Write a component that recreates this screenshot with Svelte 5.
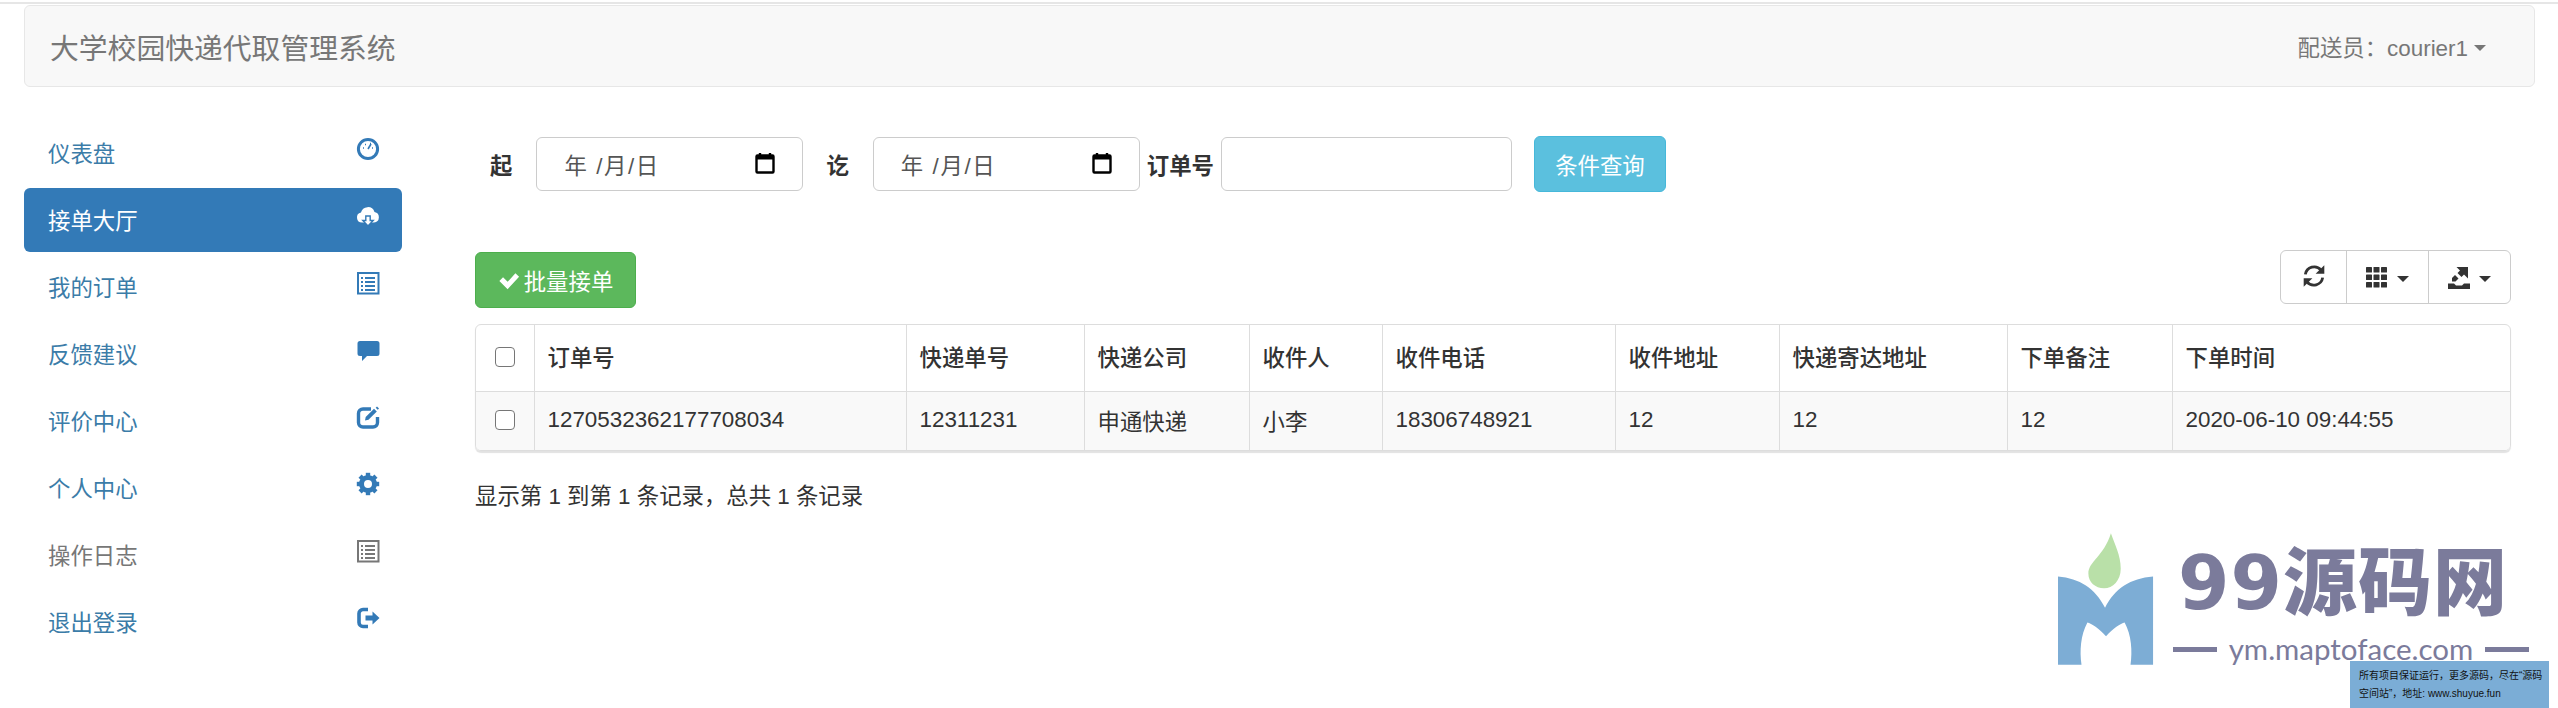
<script>
    const menu = [
        { label: '仪表盘', icon: 'dashboard' },
        { label: '接单大厅', icon: 'cloud', active: true },
        { label: '我的订单', icon: 'list' },
        { label: '反馈建议', icon: 'comment' },
        { label: '评价中心', icon: 'edit' },
        { label: '个人中心', icon: 'cog' },
        { label: '操作日志', icon: 'list', muted: true },
        { label: '退出登录', icon: 'logout' }
    ];

    const columns = [
        { title: '订单号', width: 372, value: '1270532362177708034' },
        { title: '快递单号', width: 178, value: '12311231' },
        { title: '快递公司', width: 165, value: '申通快递' },
        { title: '收件人', width: 133, value: '小李' },
        { title: '收件电话', width: 233, value: '18306748921' },
        { title: '收件地址', width: 164, value: '12' },
        { title: '快递寄达地址', width: 228, value: '12' },
        { title: '下单备注', width: 165, value: '12' },
        { title: '下单时间', width: 340, value: '2020-06-10 09:44:55' }
    ];

    const teeth = [0, 45, 90, 135, 180, 225, 270, 315];
</script>

{#snippet calendar()}
    <svg class="calendar" viewBox="0 0 20 22" aria-hidden="true">
        <path d="M5 1v4M15 1v4" stroke="#000" stroke-width="2.4" />
        <rect x="1.5" y="3.5" width="17" height="17" rx="1" fill="none" stroke="#000" stroke-width="2.4" />
        <rect x="1.5" y="3.5" width="17" height="4" fill="#000" />
    </svg>
{/snippet}

{#snippet icon(name)}
    <svg class="nav-icon" viewBox="0 0 24 24" aria-hidden="true">
        {#if name === 'dashboard'}
            <circle cx="12" cy="12" r="9.6" fill="none" stroke="currentColor" stroke-width="3" />
            <path d="M12 12l3-5" stroke="currentColor" stroke-width="1.6" />
            <path d="M7 11h1M9 7.500h1M14 6.500h1M16 11h1" stroke="currentColor" stroke-width="1.3" />
        {:else if name === 'cloud'}
            <path d="M6 18.500a5 5 0 0 1-1-9.900 7 7 0 0 1 13.500-.6 5.300 5.300 0 0 1-.5 10.500z" fill="currentColor" />
            <path d="M9.800 12h4.400v4.500h3L12 22l-5.200-5.500h3z" fill="currentColor" stroke="#337ab7" stroke-width="1.400" />
        {:else if name === 'list'}
            <rect x="2" y="2" width="20.500" height="20.500" fill="none" stroke="currentColor" stroke-width="2" />
            <path d="M5 7h2M9 7h10M5 11h2M9 11h10M5 15h2M9 15h10M5 19h2M9 19h10" stroke="currentColor" stroke-width="1.800" />
        {:else if name === 'comment'}
            <path d="M4 3h17a2.500 2.500 0 0 1 2.500 2.500v10A2.500 2.500 0 0 1 21 18H11l-5 5v-5H4a2.500 2.500 0 0 1-2.500-2.500v-10A2.500 2.500 0 0 1 4 3z" fill="currentColor" />
        {:else if name === 'edit'}
            <path d="M15 4H7a4.500 4.500 0 0 0-4.500 4.500v9A4.500 4.500 0 0 0 7 22h10a4.500 4.500 0 0 0 4.500-4.500V12" fill="none" stroke="currentColor" stroke-width="3.400" />
            <path d="M9 15.500l.7-3.500L18 3.800l2.800 2.800-8.300 8.200z" fill="currentColor" />
            <path d="M21 1.500l2 2-1.300 1.300-2-2z" fill="currentColor" />
        {:else if name === 'cog'}
            <circle cx="12" cy="12" r="6.500" fill="none" stroke="currentColor" stroke-width="5" />
            {#each teeth as t}
                <rect x="9.800" y="0.800" width="4.400" height="5" fill="currentColor" transform="rotate({t} 12 12)" />
            {/each}
        {:else if name === 'logout'}
            <path d="M12 3.500H7a4 4 0 0 0-4 4v9a4 4 0 0 0 4 4h5" fill="none" stroke="currentColor" stroke-width="3.600" />
            <path d="M9.500 9.500h7V5.500l7 6.500-7 6.500v-4h-7z" fill="currentColor" />
        {/if}
    </svg>
{/snippet}

<div class="page">
    <div class="top-line"></div>
    <header class="navbar">
        <span class="brand">大学校园快递代取管理系统</span>
        <span class="user">配送员：courier1<i class="caret"></i></span>
    </header>

    <div class="content">
        <nav class="sidebar">
            {#each menu as item}
                <div class="nav-item" class:active={item.active} class:muted={item.muted}>
                    <span>{item.label}</span>
                    {@render icon(item.icon)}
                </div>
            {/each}
        </nav>

        <main class="main">
            <div class="search">
                <b class="label-from">起</b>
                <div class="date">
                    <span>年 /月/日</span>
                    {@render calendar()}
                </div>
                <b class="label-to">讫</b>
                <div class="date">
                    <span>年 /月/日</span>
                    {@render calendar()}
                </div>
                <b class="label-order">订单号</b>
                <div class="text-input"></div>
                <button class="btn-info">条件查询</button>
            </div>

            <div class="toolbar">
                <button class="btn-success">
                    <svg class="check" viewBox="0 0 24 24" aria-hidden="true">
                        <path d="M1.500 13l4-4 5 5L19 4.500l4 4L10.500 22z" fill="currentColor" />
                    </svg>批量接单
                </button>
                <div class="btn-group">
                    <button class="tool refresh" aria-label="刷新">
                        <svg viewBox="0 0 24 24" aria-hidden="true">
                            <path d="M4 10.500a8.300 8.300 0 0 1 14.500-4" fill="none" stroke="#333" stroke-width="2.600" />
                            <path d="M21.500 2v8h-8z" fill="#333" />
                            <path d="M20 13.500a8.300 8.300 0 0 1-14.500 4" fill="none" stroke="#333" stroke-width="2.600" />
                            <path d="M2.500 22v-8h8z" fill="#333" />
                        </svg>
                    </button>
                    <button class="tool columns" aria-label="列">
                        <svg viewBox="0 0 22 21" aria-hidden="true">
                            {#each [0, 7.500, 15] as y}
                                {#each [0, 7.500, 15] as x}
                                    <rect x={x} y={y} width="6" height="5.500" rx="0.600" fill="#333" />
                                {/each}
                            {/each}
                        </svg>
                        <i class="caret dark"></i>
                    </button>
                    <button class="tool export" aria-label="导出">
                        <svg viewBox="0 0 22 23" aria-hidden="true">
                            <path d="M0 17.500h6l2 2h6l2-2h6V23H0z" fill="#333" />
                            <path d="M8.500 1H20v11.500l-4-4-2.500 2.500-4-4L12 4.500z" fill="#333" />
                            <path d="M4 12l3-3 3.500 3.500-3 3H4z" fill="#333" />
                        </svg>
                        <i class="caret dark"></i>
                    </button>
                </div>
            </div>

            <div class="table-wrap">
                <table>
                    <colgroup>
                        <col style="width: 58px" />
                        {#each columns as col}
                            <col style="width: {col.width}px" />
                        {/each}
                    </colgroup>
                    <thead>
                        <tr>
                            <th class="cell-check"><span class="checkbox"></span></th>
                            {#each columns as col}
                                <th>{col.title}</th>
                            {/each}
                        </tr>
                    </thead>
                    <tbody>
                        <tr>
                            <td class="cell-check"><span class="checkbox"></span></td>
                            {#each columns as col}
                                <td>{col.value}</td>
                            {/each}
                        </tr>
                    </tbody>
                </table>
            </div>

            <p class="summary">显示第 1 到第 1 条记录，总共 1 条记录</p>
        </main>
    </div>

    <div class="logo">
        <svg class="logo-mark" viewBox="0 0 100 135" aria-hidden="true">
            <path d="M0 44c22 2 38 12 48 32 10-20 26-30 49-32v90H74c2-14 1-30-6-43-4 1-12 6-19 14-7-8-15-13-19-14-7 13-8 29-6 43H0z" fill="#7dadd5" />
            <path d="M54 0c4 12 10 22 10 36 0 12-8 20-17 20S31 50 31 41c0-12 16-18 23-41z" fill="#b9e0a8" />
        </svg>
        <div class="logo-text">
            <div class="logo-title">99源码网</div>
            <div class="logo-url"><i></i><span>ym.maptoface.com</span><i></i></div>
        </div>
    </div>

    <div class="notice">
        <div>所有项目保证运行，更多源码，尽在“源码</div>
        <div>空间站”，地址: www.shuyue.fun</div>
    </div>
</div>

<style>
    :global(body) {
        margin: 0;
        background: #fff;
    }

    .page {
        position: relative;
        width: 2558px;
        height: 708px;
        overflow: hidden;
        color: #333;
        font-family: 'Liberation Sans', 'Noto Sans CJK SC', sans-serif;
        font-size: 22.4px;
    }

    .top-line {
        height: 2px;
        margin-top: 2px;
        background: #e6e6e6;
    }

    .navbar {
        display: flex;
        align-items: center;
        justify-content: space-between;
        box-sizing: border-box;
        height: 82px;
        margin: 1px 23px 0 24px;
        padding: 0 24px 0 25px;
        background: #f8f8f8;
        border: 1.5px solid #e7e7e7;
        border-radius: 6px;
        color: #777;
    }

    .brand {
        font-size: 28.8px;
    }

    .user {
        display: flex;
        align-items: center;
        margin-right: 24px;
    }

    .caret {
        display: inline-block;
        width: 0;
        height: 0;
        margin-left: 6px;
        margin-top: 3px;
        border-top: 6.500px solid #777;
        border-left: 6.500px solid transparent;
        border-right: 6.500px solid transparent;
    }

    .caret.dark {
        border-top-color: #333;
        margin-left: 9px;
    }

    .content {
        display: flex;
        align-items: flex-start;
    }

    .sidebar {
        display: flex;
        flex-direction: column;
        gap: 3px;
        width: 378px;
        margin: 34px 73px 0 24px;
    }

    .nav-item {
        display: flex;
        align-items: center;
        justify-content: space-between;
        box-sizing: border-box;
        height: 64px;
        padding: 0 22px 3px 24px;
        border-radius: 6px;
        color: #3b7ca8;
    }

    .nav-item.active {
        background: #337ab7;
        color: #fff;
    }

    .nav-item.muted {
        color: #777;
    }

    .nav-icon {
        width: 24px;
        height: 24px;
        margin-bottom: 6px;
        color: #337ab7;
    }

    .active .nav-icon {
        color: #fff;
    }

    .muted .nav-icon {
        color: #777;
    }

    .main {
        width: 2036px;
        padding-top: 49px;
    }

    .search {
        display: flex;
        align-items: center;
        height: 56px;
    }

    .search b {
        font-weight: 700;
    }

    .label-from {
        margin: 0 24px 0 15px;
    }

    .label-to {
        margin: 0 24px 0 23px;
    }

    .label-order {
        margin: 0 7px 0 7px;
        white-space: nowrap;
    }

    .date,
    .text-input {
        box-sizing: border-box;
        height: 54px;
        background: #fff;
        border: 1.5px solid #ccc;
        border-radius: 6px;
    }

    .date {
        display: flex;
        align-items: center;
        justify-content: space-between;
        width: 267px;
        padding: 0 27px;
        color: #555;
        letter-spacing: 1.6px;
    }

    .calendar {
        width: 20px;
        height: 22px;
        margin-bottom: 3px;
    }

    .text-input {
        width: 291px;
    }

    button {
        font-family: inherit;
        font-size: 22.4px;
        cursor: pointer;
    }

    .btn-info {
        width: 132px;
        height: 56px;
        margin-left: 22px;
        padding: 0;
        color: #fff;
        background: #5bc0de;
        border: 1.5px solid #46b8da;
        border-radius: 6px;
    }

    .toolbar {
        display: flex;
        align-items: flex-start;
        justify-content: space-between;
        height: 58px;
        margin: 58px 0 16px;
    }

    .btn-success {
        display: flex;
        align-items: center;
        justify-content: center;
        width: 161px;
        height: 56px;
        margin-top: 2px;
        padding: 0;
        color: #fff;
        background: #5cb85c;
        border: 1.5px solid #4cae4c;
        border-radius: 6px;
    }

    .check {
        width: 22px;
        height: 22px;
        margin-right: 4px;
    }

    .btn-group {
        display: flex;
        height: 54px;
        box-sizing: border-box;
        background: #fff;
        border: 1.5px solid #ccc;
        border-radius: 6px;
    }

    .tool {
        display: flex;
        align-items: center;
        justify-content: center;
        height: 100%;
        padding: 0;
        background: transparent;
        border: 0;
        border-right: 1.5px solid #ccc;
    }

    .tool:last-child {
        border-right: 0;
    }

    .refresh {
        width: 66px;
    }

    .refresh svg {
        width: 26px;
        height: 26px;
        margin-bottom: 3px;
    }

    .columns {
        width: 82px;
    }

    .columns svg {
        width: 22px;
        height: 21px;
    }

    .export {
        width: 81px;
    }

    .export svg {
        width: 22px;
        height: 23px;
    }

    .table-wrap {
        box-sizing: border-box;
        border: 1.5px solid #ddd;
        border-radius: 6px;
        box-shadow: 0 2px 1px #e2e2e2;
        overflow: hidden;
    }

    table {
        width: 100%;
        table-layout: fixed;
        border-collapse: collapse;
    }

    th,
    td {
        box-sizing: border-box;
        padding: 0 13px 3px;
        text-align: left;
        border-left: 1.5px solid #ddd;
    }

    th:first-child,
    td:first-child {
        border-left: 0;
    }

    th {
        height: 66px;
        font-weight: 500;
        border-bottom: 1.5px solid #ddd;
    }

    td {
        height: 59px;
        padding-bottom: 2px;
        background: #f9f9f9;
    }

    td.cell-check {
        padding: 0 0 4px;
    }

    .cell-check {
        padding: 0 0 4px;
        text-align: center;
    }

    .checkbox {
        display: inline-block;
        box-sizing: border-box;
        width: 20px;
        height: 20px;
        vertical-align: middle;
        background: #fff;
        border: 1.5px solid #767676;
        border-radius: 4px;
    }

    .summary {
        margin: 31px 0 0;
        line-height: 30px;
    }

    .logo {
        position: absolute;
        left: 2058px;
        top: 533px;
        display: flex;
    }

    .logo-mark {
        width: 98px;
        height: 133px;
        flex: none;
    }

    .logo-text {
        margin-left: 22px;
        color: #7b7b9b;
    }

    .logo-title {
        height: 96px;
        line-height: 96px;
        margin-top: 2px;
        font-family: 'DejaVu Sans', 'Noto Sans CJK SC', sans-serif;
        font-size: 74px;
        font-weight: 900;
        letter-spacing: 1px;
        white-space: nowrap;
    }

    .logo-url {
        display: flex;
        align-items: center;
        gap: 12px;
        width: 356px;
        margin-left: -5px;
        font-family: Lato, sans-serif;
        font-size: 29.5px;
        line-height: 36px;
        white-space: nowrap;
    }

    .logo-url i {
        display: block;
        flex: 1;
        height: 5px;
        background: #7b7b9b;
    }

    .notice {
        position: absolute;
        left: 2350px;
        top: 661px;
        box-sizing: border-box;
        width: 199px;
        height: 47px;
        padding: 6px 0 0 9px;
        background: #7badd6;
        color: #111;
        font-size: 10px;
        line-height: 18px;
        white-space: nowrap;
    }
</style>
